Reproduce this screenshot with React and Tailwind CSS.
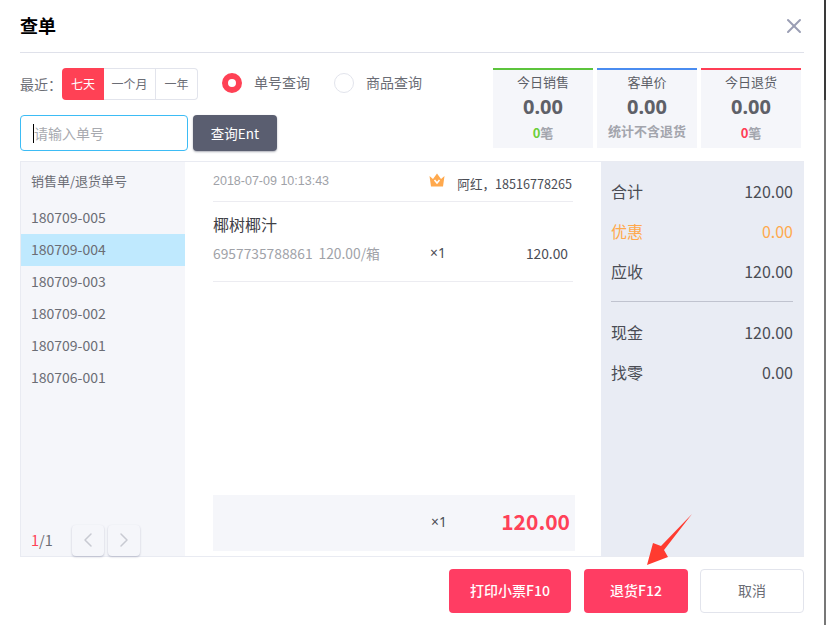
import { ChevronLeft, ChevronRight, X } from 'lucide-react'

const orders = ['180709-005', '180709-004', '180709-003', '180709-002', '180709-001', '180706-001']

const stats = [
  { title: '今日销售', border: 'border-[#5cc43c]', num: '0', numColor: 'text-[#6ccf3a]' },
  { title: '客单价', border: 'border-[#4a8cf0]', note: '统计不含退货' },
  { title: '今日退货', border: 'border-[#ff3d55]', num: '0', numColor: 'text-[#ff3d55]' },
]

const totals = [
  { label: '合计', value: '120.00' },
  { label: '优惠', value: '0.00', orange: true },
  { label: '应收', value: '120.00' },
]

const latin = { fontFamily: '"Noto Sans", sans-serif' }

const StatCard = ({ title, border, num, numColor, note }) => (
  <div className={`w-[100px] h-20 bg-[#f5f6fa] border-t-2 ${border} flex flex-col items-center`}>
    <div className="h-[22px] leading-[22px] mt-[1px] text-[13px] text-[#5c5e66]">{title}</div>
    <div className="h-[30px] leading-[30px] mt-[-1px] text-[20px] font-bold text-[#5e6068]" style={latin}>0.00</div>
    {note ? (
      <div className="h-[20px] leading-[20px] mt-[-1px] text-[13px] font-bold text-[#a3a5ad]">{note}</div>
    ) : (
      <div className="h-[20px] leading-[20px] mt-[1px] text-[13px] font-bold text-[#a3a5ad]">
        <span className={numColor}>{num}</span>笔
      </div>
    )}
  </div>
)

const TotalRow = ({ label, value, orange }) => (
  <div className={`h-10 flex items-center justify-between text-[16px] ${orange ? 'text-[#ffa94d]' : 'text-[#4a4c54]'}`}>
    <span>{label}</span>
    <span>{value}</span>
  </div>
)

const App = () => {
  return (
    <div
      className="relative w-[826px] h-[625px] bg-white flex overflow-hidden"
      style={{ fontFamily: '"Noto Sans CJK SC", "Noto Sans", sans-serif' }}
    >
      <div className="w-[824px] h-full pl-5 pr-5 flex flex-col">

        {/* Header */}
        <div className="h-[53px] border-b border-[#dfe1ea] flex items-center justify-between shrink-0">
          <h1 className="text-[18px] font-bold text-black leading-none mb-[2px]">查单</h1>
          <X size={24} strokeWidth={2} className="text-[#9a9eb4] mr-[-2px]" />
        </div>

        {/* Filters and stats */}
        <div className="h-[108px] pt-[15px] flex justify-between shrink-0">
          <div className="flex flex-col">
            <div className="h-8 flex items-center">
              <span className="w-[42px] text-[14px] text-[#6b6d75] whitespace-nowrap">最近：</span>
              <div className="h-8 flex text-[12px] text-[#6b6d75] leading-[30px] text-center">
                <div className="w-[42px] leading-[32px] rounded-l bg-[#ff4155] text-white">七天</div>
                <div className="w-[52px] border-y border-r border-[#e2e4ec]">一个月</div>
                <div className="w-[42px] border-y border-r rounded-r border-[#e2e4ec]">一年</div>
              </div>
              <div className="flex items-center ml-6 text-[14px] text-[#6b6d75]">
                <div className="w-5 h-5 rounded-full border-[6px] border-[#ff4155] bg-white mb-[2px]" />
                <span className="ml-3 w-[68px] mb-[4px] whitespace-nowrap">单号查询</span>
                <div className="w-5 h-5 rounded-full border border-[#e2e4ec] bg-white mb-[2px] ml-3" />
                <span className="ml-3 mb-[4px]">商品查询</span>
              </div>
            </div>
            <div className="flex mt-[15px] gap-[5px]">
              <div className="w-[168px] h-9 rounded border border-[#3dbcf5] flex items-center pl-[13px] text-[14px] text-[#a8aab0] relative">
                <span className="absolute left-[12px] top-[8px] w-px h-[19px] bg-black" />
                请输入单号
              </div>
              <button className="w-[84px] h-9 rounded bg-[#5a5e70] text-white text-[13.5px] shadow-[0_1px_2px_rgba(90,94,112,0.5)]">
                查询Ent
              </button>
            </div>
          </div>
          <div className="flex gap-1 mr-[3px]">
            {stats.map((s) => <StatCard key={s.title} {...s} />)}
          </div>
        </div>

        {/* Order details */}
        <div className="h-[396px] flex border-t border-b border-l border-[#e9ebf2] shrink-0">
          <div className="w-[164px] bg-[#f5f6fa] flex flex-col">
            <div className="h-10 pl-[10px] pb-[2px] flex items-center text-[13px] text-[#6b6d75]">销售单/退货单号</div>
            {orders.map((id, i) => (
              <div
                key={id}
                className={`h-8 pl-[10px] pb-[2px] flex items-center text-[14px] text-[#6b6d75] ${i === 1 ? 'bg-[#bfe9fe]' : ''}`}
              >
                {id}
              </div>
            ))}
            <div className="mt-auto h-[32px] flex items-center pl-[10px]">
              <span className="w-[41px] text-[14.5px] text-[#6b6d75]"><span className="text-[#ff4155]">1</span>/1</span>
              <div className="w-8 h-[31px] rounded-sm bg-[#f5f6fa] shadow-[0_1px_2px_rgba(120,125,150,0.45)] flex items-center justify-center">
                <ChevronLeft size={24} strokeWidth={1.5} className="text-[#c8cad2]" />
              </div>
              <div className="w-8 h-[31px] ml-1 rounded-sm bg-[#f5f6fa] shadow-[0_1px_2px_rgba(120,125,150,0.45)] flex items-center justify-center">
                <ChevronRight size={24} strokeWidth={1.5} className="text-[#c8cad2]" />
              </div>
            </div>
          </div>

          <div className="w-[416px] px-7 flex flex-col">
            <div className="h-10 border-b border-[#ececf1] flex items-center justify-between pr-px">
              <span className="text-[12.5px] text-[#a0a2a8]" style={{ fontFamily: '"Liberation Sans", sans-serif' }}>2018-07-09 10:13:43</span>
              <div className="flex items-center">
                <svg width="16" height="14" viewBox="0 0 16 14" className="mb-[3px]">
                  <path d="M0.5 3 L4 6 L8 0.5 L12 6 L15.5 3 L14 13.5 H2 Z" fill="#ffa94d" />
                  <path d="M5.5 7 L8 10 L10.5 7" fill="none" stroke="#fff" strokeWidth="1.6" />
                </svg>
                <span className="ml-[12px] text-[12.6px] text-[#4a4c54] mt-[5px]">阿红，18516778265</span>
              </div>
            </div>
            <div className="h-20 border-b border-[#ececf1]">
              <div className="mt-[11px] h-[22px] leading-[22px] text-[16px] text-[#3f4147]">椰树椰汁</div>
              <div className="mt-[7px] h-[22px] flex items-center text-[13.8px] pr-[5px]">
                <span className="w-[217px] flex gap-[6px] text-[#a0a2a8] whitespace-nowrap">
                  <span>6957735788861</span>
                  <span>120.00/箱</span>
                </span>
                <span className="text-[#4a4c54]" style={latin}>×1</span>
                <span className="ml-auto text-[#4a4c54]">120.00</span>
              </div>
            </div>
            <div className="mt-auto mb-[5px] w-[362px] h-14 bg-[#f5f6fa] flex items-center pr-[5px] pb-[2px]">
              <span className="ml-[218px] text-[13.8px] text-[#4a4c54]" style={latin}>×1</span>
              <span className="ml-auto text-[21px] font-bold text-[#ff4158]">120.00</span>
            </div>
          </div>

          <div className="w-[203px] bg-[#e9ecf4] pl-[10px] pr-[11px] pt-[9px]">
            {totals.map((t) => <TotalRow key={t.label} {...t} />)}
            <div className="mt-[10px] mb-[10px] border-t border-[#c0c3cf]" />
            <TotalRow label="现金" value="120.00" />
            <TotalRow label="找零" value="0.00" />
          </div>
        </div>

        {/* Footer */}
        <div className="flex justify-end gap-3 mt-3 text-[14px]">
          <button className="w-[122px] h-11 pb-[2px] rounded-sm bg-[#ff3d63] text-white font-medium">打印小票F10</button>
          <button className="w-[104px] h-11 pb-[2px] rounded-sm bg-[#ff3d63] text-white font-medium ml-[1px]">退货F12</button>
          <button className="w-[104px] h-11 pb-[2px] rounded-sm bg-white border border-[#e2e4ec] text-[#6b6d75]">取消</button>
        </div>
      </div>

      {/* Scrollbar edge */}
      <div className="w-[2px] h-full flex flex-col">
        <div className="h-[100px] bg-[#3a3a3a]" />
        <div className="flex-1 bg-[#777777]" />
      </div>

      {/* Annotation arrow */}
      <svg width="60" height="60" viewBox="0 0 60 60" className="absolute left-[640px] top-[510px]">
        <path d="M52 4 L21 36 L13 33 L7 55 L28 47 L24 40 Z" fill="#ff3b30" />
      </svg>
    </div>
  )
}

export default App
